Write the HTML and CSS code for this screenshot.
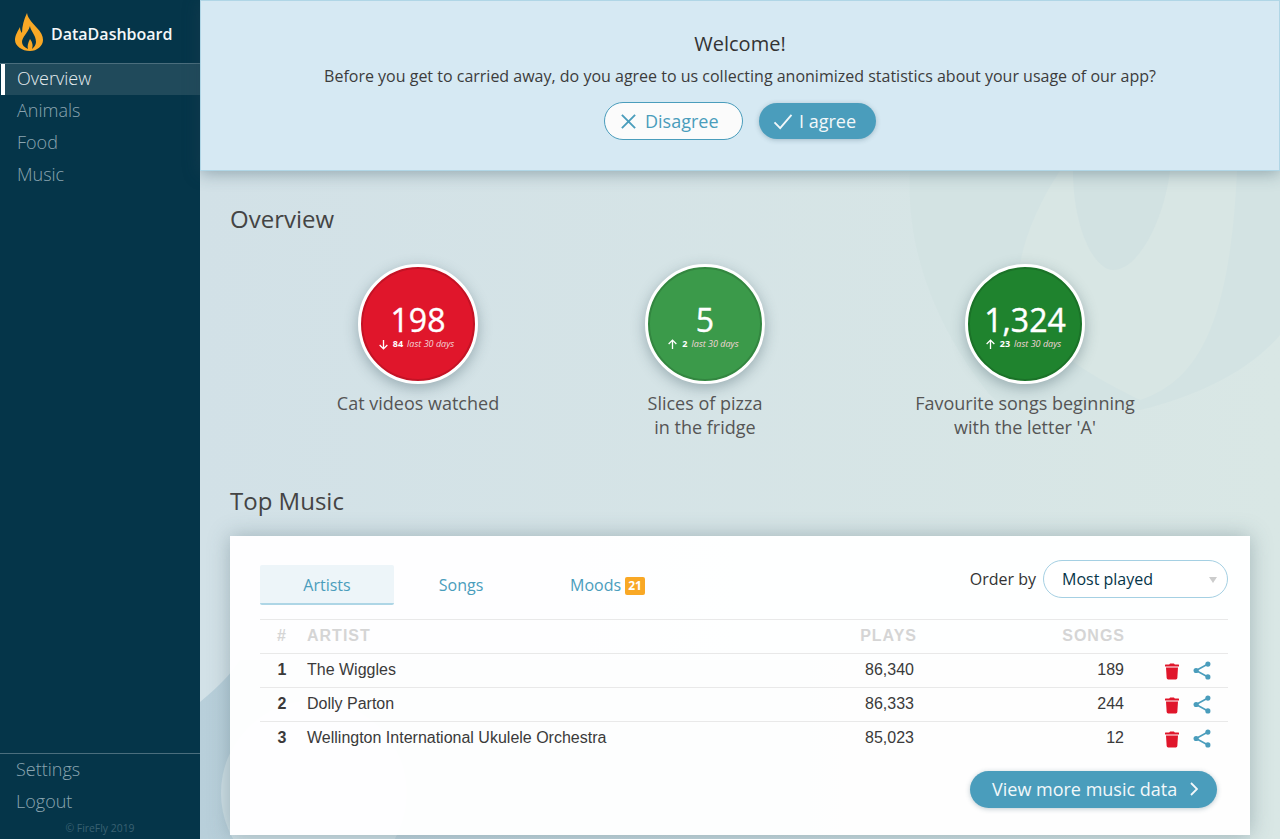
FILE: index.html
```html
<!DOCTYPE html>
<html lang="en">
<head>
  <meta charset="UTF-8" />
  <title>DataDashboard</title>
  <link rel="stylesheet" href="styles.css">
</head>
<body>
  <aside class="sidebar">
    <div class="brand">
      <svg class="brand-logo" viewBox="0 0 29 38"><path fill="#f9a825" fill-rule="evenodd" d="M12 0C13 6 18 10 22 15 26 19 28 23 28 27 28 33 22 38 15 38 7 38 0 33 0 27 0 22 3 18 5 14 5 17 6 19 7 20 7 13 9 6 12 0ZM15 13C15 17 21 22 21 29 21 32 19 34 17 36 18 33 18 30 15 26 13 30 12 33 13 36 9 34 7 32 7 29 7 24 13 20 15 13Z"/></svg>
      <span class="brand-name">DataDashboard</span>
    </div>
    <nav class="nav">
      <a class="nav-item active">Overview</a>
      <a class="nav-item">Animals</a>
      <a class="nav-item">Food</a>
      <a class="nav-item">Music</a>
    </nav>
    <div class="nav-bottom">
      <a class="nav-item">Settings</a>
      <a class="nav-item">Logout</a>
      <p class="copyright">© FireFly 2019</p>
    </div>
  </aside>

  <main class="main">
    <svg class="watermark" viewBox="0 0 1080 839">
      <defs>
        <linearGradient id="low" x1="0" x2="1" y1="0" y2="0">
          <stop offset="0" stop-color="#b8cfda"/>
          <stop offset="1" stop-color="#d2e2e2"/>
        </linearGradient>
      </defs>
      <!-- big flame behind the page -->
      <path fill="#d3e3e3" d="M710 171C705 260 745 340 790 395 800 405 810 410 820 410L940 410C1000 395 1050 370 1080 335V171Z"/>
      <path fill="#d8e6e4" d="M860 171C830 215 812 270 820 300 840 350 900 380 940 400 1000 380 1030 320 1037 171Z"/>
      <path fill="#d2e2e2" d="M873 171C873 230 895 270 913 270 940 270 965 215 970 171Z"/>
      <path fill="url(#low)" d="M0 702C20 685 30 675 40 660H1050V839H0Z"/>
      <circle cx="114" cy="793" r="93" fill="#cddee4"/>
    </svg>

    <section class="consent">
      <h2 class="consent-title">Welcome!</h2>
      <p class="consent-text">Before you get to carried away, do you agree to us collecting anonimized statistics about your usage of our app?</p>
      <div class="consent-actions">
        <button class="btn btn-outline">
          <svg class="btn-icon" viewBox="0 0 18 18"><path d="M2 2l14 14M16 2L2 16"/></svg>
          Disagree
        </button>
        <button class="btn btn-solid">
          <svg class="btn-icon wide" viewBox="0 0 20 18"><path d="M1 10l6 6L19 2"/></svg>
          I agree
        </button>
      </div>
    </section>

    <div class="content">
      <h1 class="section-title">Overview</h1>
      <div class="stats">
        <div class="stat">
          <div class="circle red">
            <span class="stat-num">198</span>
            <span class="stat-sub"><svg class="arrow" viewBox="0 0 10 10"><path d="M5 1v8M1.500 5.500L5 9l3.500-3.500"/></svg> <b>84</b> <i>last 30 days</i></span>
          </div>
          <p class="stat-label">Cat videos watched</p>
        </div>
        <div class="stat">
          <div class="circle green-light">
            <span class="stat-num">5</span>
            <span class="stat-sub"><svg class="arrow" viewBox="0 0 10 10"><path d="M5 9V1M1.500 4.500L5 1l3.500 3.500"/></svg> <b>2</b> <i>last 30 days</i></span>
          </div>
          <p class="stat-label">Slices of pizza<br>in the fridge</p>
        </div>
        <div class="stat">
          <div class="circle green">
            <span class="stat-num">1,324</span>
            <span class="stat-sub"><svg class="arrow" viewBox="0 0 10 10"><path d="M5 9V1M1.500 4.500L5 1l3.500 3.500"/></svg> <b>23</b> <i>last 30 days</i></span>
          </div>
          <p class="stat-label">Favourite songs beginning<br>with the letter 'A'</p>
        </div>
      </div>

      <h1 class="section-title music-title">Top Music</h1>
      <div class="card">
        <div class="card-top">
          <div class="tabs">
            <a class="tab active">Artists</a>
            <a class="tab">Songs</a>
            <a class="tab moods">Moods <span class="badge">21</span></a>
          </div>
          <div class="order">
            <label class="order-label">Order by</label>
            <div class="select">Most played<span class="caret"></span></div>
          </div>
        </div>
        <table class="table">
          <thead>
            <tr><th class="c-rank">#</th><th class="c-name">Artist</th><th class="c-num">Plays</th><th class="c-songs">Songs</th><th class="c-act"></th></tr>
          </thead>
          <tbody>
            <tr>
              <td class="c-rank">1</td><td class="c-name">The Wiggles</td><td class="c-num">86,340</td><td class="c-songs">189</td>
              <td class="c-act"><svg class="trash" viewBox="0 0 448 512"><path d="M432 32H312l-9.400-18.700A24 24 0 0 0 281.100 0H166.800a23.720 23.720 0 0 0-21.400 13.300L136 32H16A16 16 0 0 0 0 48v32a16 16 0 0 0 16 16h416a16 16 0 0 0 16-16V48a16 16 0 0 0-16-16zM53.200 467a48 48 0 0 0 47.900 45h245.800a48 48 0 0 0 47.900-45L416 128H32z"/></svg><svg class="share" viewBox="0.600 0.300 16.800 17.400"><path d="M14.500 3L3.500 9l11 6"/><circle cx="14.500" cy="3" r="2.400"/><circle cx="3.500" cy="9" r="2.400"/><circle cx="14.500" cy="15" r="2.400"/></svg></td>
            </tr>
            <tr>
              <td class="c-rank">2</td><td class="c-name">Dolly Parton</td><td class="c-num">86,333</td><td class="c-songs">244</td>
              <td class="c-act"><svg class="trash" viewBox="0 0 448 512"><path d="M432 32H312l-9.400-18.700A24 24 0 0 0 281.100 0H166.800a23.720 23.720 0 0 0-21.400 13.300L136 32H16A16 16 0 0 0 0 48v32a16 16 0 0 0 16 16h416a16 16 0 0 0 16-16V48a16 16 0 0 0-16-16zM53.200 467a48 48 0 0 0 47.900 45h245.800a48 48 0 0 0 47.900-45L416 128H32z"/></svg><svg class="share" viewBox="0.600 0.300 16.800 17.400"><path d="M14.500 3L3.500 9l11 6"/><circle cx="14.500" cy="3" r="2.400"/><circle cx="3.500" cy="9" r="2.400"/><circle cx="14.500" cy="15" r="2.400"/></svg></td>
            </tr>
            <tr>
              <td class="c-rank">3</td><td class="c-name">Wellington International Ukulele Orchestra</td><td class="c-num">85,023</td><td class="c-songs">12</td>
              <td class="c-act"><svg class="trash" viewBox="0 0 448 512"><path d="M432 32H312l-9.400-18.700A24 24 0 0 0 281.100 0H166.800a23.720 23.720 0 0 0-21.400 13.300L136 32H16A16 16 0 0 0 0 48v32a16 16 0 0 0 16 16h416a16 16 0 0 0 16-16V48a16 16 0 0 0-16-16zM53.200 467a48 48 0 0 0 47.900 45h245.800a48 48 0 0 0 47.900-45L416 128H32z"/></svg><svg class="share" viewBox="0.600 0.300 16.800 17.400"><path d="M14.500 3L3.500 9l11 6"/><circle cx="14.500" cy="3" r="2.400"/><circle cx="3.500" cy="9" r="2.400"/><circle cx="14.500" cy="15" r="2.400"/></svg></td>
            </tr>
          </tbody>
        </table>
        <div class="card-foot">
          <button class="btn btn-solid btn-more">View more music data
            <svg class="chevron" viewBox="0 0 8 14"><path d="M1 1l6 6-6 6"/></svg>
          </button>
        </div>
      </div>
    </div>
  </main>
</body>
</html>
```

FILE: styles.css
```css
* {
  box-sizing: border-box;
}

html, body {
  height: 100%;
}

body {
  margin: 0;
  display: flex;
  height: 839px;
  overflow: hidden;
  font-family: "Open Sans", sans-serif;
  color: #333;
}

/* sidebar */
.sidebar {
  width: 200px;
  flex: none;
  display: flex;
  flex-direction: column;
  background-color: #053549;
}

.brand {
  height: 64px;
  display: flex;
  align-items: center;
  padding-left: 15px;
  border-bottom: 1px solid #4b6e7d;
}

.brand-logo {
  width: 29px;
  height: 38px;
}

.brand-name {
  margin: 5px 0 0 7px;
  font-size: 16px;
  font-weight: 600;
  color: #f4f7f8;
}

.nav {
  flex: 1;
}

.nav-item {
  display: block;
  height: 32px;
  line-height: 28px;
  padding-left: 17px;
  font-size: 18px;
  font-weight: 300;
  color: #8ba5b1;
}

.nav-item.active {
  height: 31px;
  margin-left: 1px;
  margin-bottom: 1px;
  padding-left: 12px;
  border-left: 4px solid #fff;
  background-color: #204a5b;
  color: #e6edf0;
}

.nav-bottom {
  border-top: 1px solid #4b6e7d;
}

.nav-bottom .nav-item {
  line-height: 30px;
  padding-left: 16px;
}

.copyright {
  margin: 3px 0 0;
  height: 18px;
  font-size: 10.400px;
  text-align: center;
  color: #3a6172;
}

/* main */
.main {
  position: relative;
  flex: 1;
  min-width: 0;
  background: linear-gradient(90deg, #d2e1e7, #d9e7e5);
}

.watermark {
  position: absolute;
  left: 0;
  top: 0;
  width: 1080px;
  height: 839px;
}

.consent {
  position: relative;
  height: 171px;
  padding-top: 29px;
  text-align: center;
  background-color: #d6e9f3;
  border: 1px solid #b0d6e6;
  box-shadow: 0 2px 16px rgba(40, 70, 85, .4);
}

.consent-title {
  margin: 0;
  font-size: 20px;
  line-height: 28px;
  font-weight: 400;
  color: #333;
}

.consent-text {
  margin: 6px 0 0;
  font-size: 16px;
  line-height: 24px;
  color: #3c3c3c;
}

.consent-actions {
  display: flex;
  justify-content: center;
  align-items: center;
  gap: 16px;
  margin-top: 14px;
}

.btn {
  display: inline-flex;
  align-items: center;
  border-radius: 20px;
  font-family: inherit;
  font-size: 18px;
  cursor: pointer;
  padding: 0;
}

.btn-icon {
  width: 17px;
  height: 17px;
  fill: none;
  stroke: currentColor;
  stroke-width: 2;
  margin-right: 8px;
}

.btn-icon.wide {
  width: 20px;
  margin-right: 6px;
}

.btn-outline {
  width: 139px;
  height: 38px;
  padding-left: 15px;
  background-color: #fbfbfb;
  border: 1px solid #4a9dbc;
  color: #4a9dbc;
}

.btn-solid {
  background-color: #4a9dbc;
  border: none;
  color: #f2f8fa;
  box-shadow: 0 1px 5px rgba(40, 80, 100, .3);
}

.consent-actions .btn-solid {
  width: 117px;
  height: 36px;
  padding-left: 14px;
}

/* content */
.content {
  position: relative;
  padding: 0 30px;
}

.section-title {
  margin: 0;
  font-size: 24px;
  line-height: 32px;
  font-weight: 400;
  color: #444;
  padding-top: 32px;
  height: 64px;
}

.stats {
  display: grid;
  grid-template-columns: 220px 354px 286px;
  padding-left: 78px;
  margin-top: 29px;
  height: 221px;
}

.stat {
  display: flex;
  flex-direction: column;
  align-items: center;
}

.circle {
  width: 120px;
  height: 120px;
  flex: none;
  padding-top: 37px;
  border-radius: 50%;
  border: 3px solid #fff;
  display: flex;
  flex-direction: column;
  align-items: center;
  color: #fff;
  box-shadow: 0 4px 14px rgba(40, 70, 80, .35), inset 0 0 0 2px rgba(0, 0, 0, .13);
}

.red {
  background-color: #e0162b;
}

.green-light {
  background-color: #3b9a4a;
}

.green {
  background-color: #1f832e;
}

.stat-num {
  font-size: 32px;
  line-height: 32px;
  -webkit-text-stroke: .4px #fff;
}

.stat-sub {
  display: flex;
  align-items: center;
  gap: 4px;
  margin: 2px 4px 0 0;
  font-size: 9px;
  line-height: 12px;
  color: #f3d5d8;
}

.stat-sub b {
  color: #fff;
}

.arrow {
  width: 11px;
  height: 11px;
  fill: none;
  stroke: #fff;
  stroke-width: 1.200;
}

.stat-label {
  margin: 7px 0 0;
  font-size: 18px;
  line-height: 24px;
  text-align: center;
  color: #555;
}

.music-title {
  padding-top: 0;
  height: 32px;
  margin-bottom: 19px;
}

/* card */
.card {
  height: 299px;
  padding: 24px 22px 0 30px;
  background-color: rgba(255, 255, 255, .97);
  box-shadow: 0 0 20px rgba(60, 90, 100, .35);
}

.card-top {
  display: flex;
  justify-content: space-between;
}

.tabs {
  display: flex;
  margin-top: 5px;
}

.tab {
  min-width: 134px;
  height: 40px;
  line-height: 40px;
  padding: 0 43px;
  text-align: center;
  font-size: 16px;
  color: #4a9dbc;
}

.tab.active {
  background-color: #edf5f9;
  border-bottom: 2px solid #aed6e6;
  border-radius: 2px;
}

.moods {
  padding: 0 0 0 42px;
  text-align: left;
}

.badge {
  display: inline-block;
  height: 18px;
  line-height: 18px;
  padding: 0 3px;
  border-radius: 2px;
  background-color: #f9a825;
  color: #fff;
  font-size: 12px;
  font-weight: 700;
  vertical-align: 1px;
}

.order {
  display: flex;
  align-self: flex-start;
  align-items: center;
  gap: 7px;
}

.order-label {
  font-size: 16px;
  color: #333;
}

.select {
  position: relative;
  width: 185px;
  height: 38px;
  line-height: 36px;
  padding-left: 18px;
  font-size: 16px;
  color: #053549;
  background-color: #fff;
  border: 1px solid #a5d0e3;
  border-radius: 19px;
}

.caret {
  position: absolute;
  right: 10px;
  top: 16px;
  border-left: 4px solid transparent;
  border-right: 4px solid transparent;
  border-top: 6px solid #ccc;
}

.table {
  width: 968px;
  margin-top: 14px;
  border-collapse: collapse;
  table-layout: fixed;
  font-family: "Liberation Sans", sans-serif;
  font-size: 16px;
}

.table th {
  height: 34px;
  font-weight: 700;
  color: #d5d5d5;
  letter-spacing: 1px;
  text-transform: uppercase;
  border-top: 1px solid #e9e9e9;
  padding-bottom: 2px;
}

.table td {
  height: 34px;
  color: #3a3a3a;
  border-top: 1px solid #e9e9e9;
  padding-bottom: 2px;
}

.c-rank {
  width: 47px;
  padding: 0 3px 0 0;
  text-align: center;
}

td.c-rank {
  font-weight: 700;
}

.c-name {
  text-align: left;
  padding: 0;
}

.c-num {
  width: 200px;
  text-align: right;
  padding: 0;
}

td.c-num {
  padding-right: 3px;
}

.c-songs {
  width: 208px;
  text-align: right;
  padding: 0;
}

td.c-songs {
  padding-right: 1px;
}

.c-act {
  width: 103px;
  padding: 0 0 0 40px;
  white-space: nowrap;
}

.trash {
  width: 14px;
  height: 17px;
  fill: #e0162b;
  vertical-align: middle;
  margin-top: 4px;
}

.share {
  width: 18px;
  height: 19px;
  margin-left: 14px;
  fill: #4a9dbc;
  vertical-align: middle;
  margin-top: 2px;
}

.share path {
  fill: none;
  stroke: #4a9dbc;
  stroke-width: 1.500;
}

.card-foot {
  display: flex;
  justify-content: flex-end;
  margin-top: 15px;
  padding-right: 11px;
}

.btn-more {
  width: 247px;
  height: 37px;
  padding-left: 22px;
}

.chevron {
  width: 8px;
  height: 14px;
  margin-left: 13px;
  fill: none;
  stroke: currentColor;
  stroke-width: 1.800;
}
```
